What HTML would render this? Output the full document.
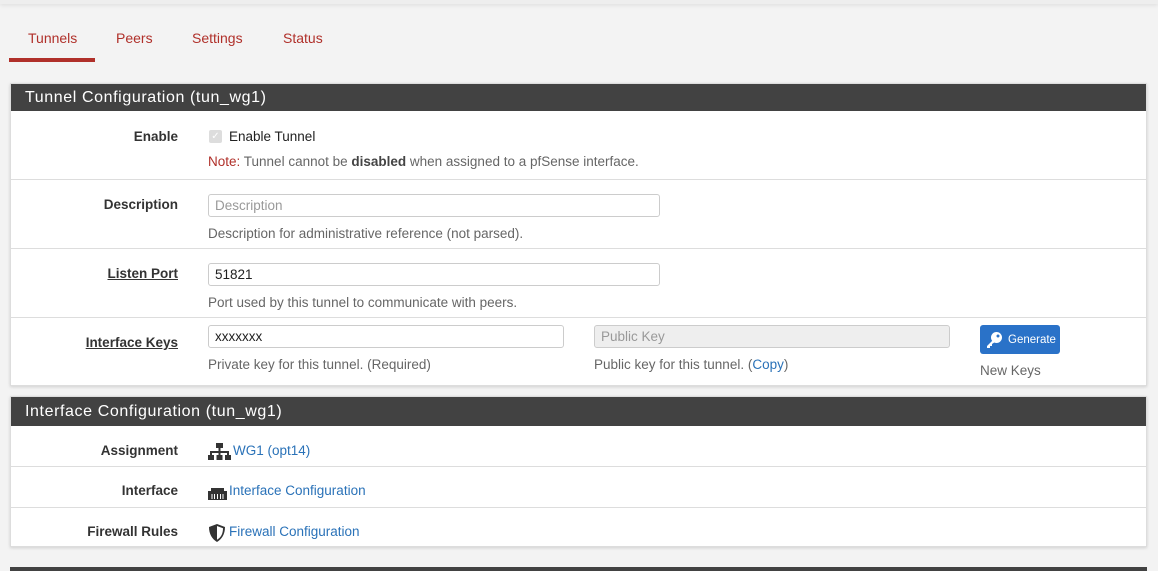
<!DOCTYPE html>
<html><head><style>
*{box-sizing:border-box;margin:0;padding:0}
body{width:1158px;height:571px;overflow:hidden;background:#f3f3f3;font-family:"Liberation Sans",sans-serif;font-size:13.5px;color:#212121;position:relative}
.top{position:absolute;left:0;top:0;width:1158px;height:4px;background:#eee;box-shadow:0 1px 4px rgba(0,0,0,.1)}
.tab{position:absolute;top:30px;color:#b0302a;font-size:14px}
.ul{position:absolute;left:9px;top:58px;width:86px;height:4px;background:#b0302a}
.panel{position:absolute;left:10px;width:1137px;background:#fff;box-shadow:0 1px 3px rgba(0,0,0,.15);border:1px solid #ddd}
.hd{background:#424242;color:#fff;font-size:16px;letter-spacing:.6px;height:27px;line-height:28px;padding-left:14px}
.row{position:absolute;left:0;width:100%;border-top:1px solid #ddd}
.lbl{position:absolute;right:968px;font-weight:bold;color:#333;font-size:13.5px;white-space:nowrap}
.u{text-decoration:underline}
.t{position:absolute;white-space:nowrap}
.help{color:#666}
.inp{position:absolute;height:23px;border:1px solid #ccc;border-radius:3px;padding-left:6px;line-height:22px;font-size:13.5px}
a{color:#2a72b8;text-decoration:none}
.btn{position:absolute;left:969px;background:#2a72c8;color:#fff;border-radius:3px;width:80px;height:29px;font-size:11.5px;line-height:30px;padding-left:28px}
</style></head><body>
<div class="top"></div>
<div class="tab" style="left:28px">Tunnels</div>
<div class="tab" style="left:116px">Peers</div>
<div class="tab" style="left:192px">Settings</div>
<div class="tab" style="left:283px">Status</div>
<div class="ul"></div>

<div class="panel" style="top:83px;height:303px">
<div class="hd">Tunnel Configuration (tun_wg1)</div>
<div class="row" style="top:27px;border-top:none;height:68px">
<div class="lbl" style="top:18px">Enable</div>
<div class="t" style="left:198px;top:19px;width:13px;height:13px;background:#ddd;border-radius:2px;color:#fff;font-size:10px;text-align:center;line-height:13px">✓</div>
<div class="t" style="left:218px;top:18px">Enable Tunnel</div>
<div class="t help" style="left:197px;top:43px;font-size:13.5px"><span style="color:#b0302a">Note:</span> Tunnel cannot be <b style="color:#444">disabled</b> when assigned to a pfSense interface.</div>
</div>
<div class="row" style="top:95px;height:69px">
<div class="lbl" style="top:17px">Description</div>
<div class="inp" style="left:197px;top:14px;width:452px;color:#999">Description</div>
<div class="t help" style="left:197px;top:46px">Description for administrative reference (not parsed).</div>
</div>
<div class="row" style="top:164px;height:69px">
<div class="lbl u" style="top:17px">Listen Port</div>
<div class="inp" style="left:197px;top:14px;width:452px">51821</div>
<div class="t help" style="left:197px;top:46px">Port used by this tunnel to communicate with peers.</div>
</div>
<div class="row" style="top:233px;height:68px">
<div class="lbl u" style="top:17px">Interface Keys</div>
<div class="inp" style="left:197px;top:7px;width:356px">xxxxxxx</div>
<div class="t help" style="left:197px;top:39px">Private key for this tunnel. (Required)</div>
<div class="inp" style="left:583px;top:7px;width:356px;background:#eee;color:#999">Public Key</div>
<div class="t help" style="left:583px;top:39px">Public key for this tunnel. (<a>Copy</a>)</div>
<div class="btn" style="top:7px"><svg style="position:absolute;left:5px;top:6px" width="18" height="18" viewBox="0 0 18 18"><circle cx="11.5" cy="6.5" r="5.5" fill="#fff"/><path d="M8 9 L2 15 L2 17 L5 17 L5 15 L7 15 L7 13 L10 11Z" fill="#fff"/><circle cx="13" cy="5" r="1.5" fill="#2a72c8"/></svg>Generate</div>
<div class="t help" style="left:969px;top:45px">New Keys</div>
</div>
</div>

<div class="panel" style="top:396px;height:151px">
<div class="hd" style="height:29px;line-height:29px">Interface Configuration (tun_wg1)</div>
<div class="row" style="top:29px;border-top:none;height:40px">
<div class="lbl" style="top:17px">Assignment</div>
<svg class="t" style="left:197px;top:17px" width="23" height="18" viewBox="0 0 23 18"><rect x="8" y="0" width="7" height="5" fill="#333"/><rect x="10.5" y="5" width="2" height="4" fill="#333"/><rect x="2" y="8" width="19" height="2" fill="#333"/><rect x="2" y="8" width="2" height="4" fill="#333"/><rect x="19" y="8" width="2" height="4" fill="#333"/><rect x="10.5" y="8" width="2" height="4" fill="#333"/><rect x="0" y="12" width="6" height="5" fill="#333"/><rect x="8.5" y="12" width="6" height="5" fill="#333"/><rect x="17" y="12" width="6" height="5" fill="#333"/></svg>
<div class="t" style="left:222px;top:17px"><a>WG1 (opt14)</a></div>
</div>
<div class="row" style="top:69px;height:41px">
<div class="lbl" style="top:16px">Interface</div>
<svg class="t" style="left:197px;top:18px" width="19" height="15" viewBox="0 0 19 15"><path d="M3 3 H16 V6 H19 V15 H0 V6 H3Z" fill="#333"/><path d="M4 9V14M6.5 9V14M9.5 9V14M12.5 9V14M15 9V14" stroke="#fff" stroke-width="1"/></svg>
<div class="t" style="left:218px;top:16px"><a>Interface Configuration</a></div>
</div>
<div class="row" style="top:110px;height:40px">
<div class="lbl" style="top:16px">Firewall Rules</div>
<svg class="t" style="left:197px;top:15px" width="18" height="20" viewBox="0 0 18 20"><path d="M9 1 L17 4 C17 11 14 16 9 19 C4 16 1 11 1 4Z" fill="#333"/><path d="M9 3 L15 5.3 C15 10.5 13 14.5 9 16.8Z" fill="#fff"/></svg>
<div class="t" style="left:218px;top:16px"><a>Firewall Configuration</a></div>
</div>
</div>
<div style="position:absolute;left:10px;top:567px;width:1137px;height:4px;background:#424242"></div>
</body></html>
